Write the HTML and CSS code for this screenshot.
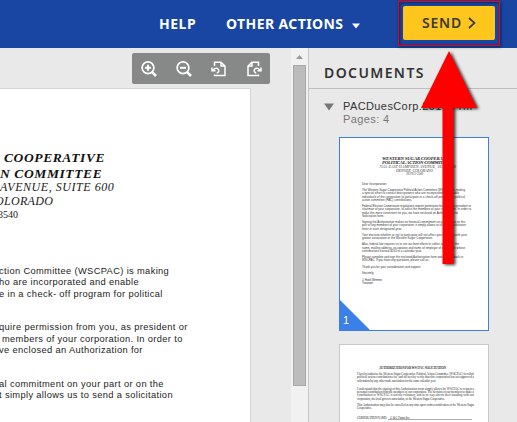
FILE: index.html
```html
<!DOCTYPE html>
<html lang="en">
<head>
<meta charset="utf-8">
<title>Documents</title>
<link rel="stylesheet" href="styles.css">
</head>
<body>
<header class="topbar">
  <a class="nav help">HELP</a>
  <a class="nav actions">OTHER ACTIONS</a>
  <svg class="caret" width="8" height="6" viewBox="0 0 8 6"><path d="M0 0.5H8L4 5.5Z" fill="#fff"/></svg>
  <div class="send-frame">
    <button class="send"><span>SEND</span><svg width="8" height="12" viewBox="0 0 8 12"><path d="M1 1L6.5 6L1 11" fill="none" stroke="#3c3a35" stroke-width="1.7"/></svg></button>
  </div>
</header>
<main class="workspace">
  <section class="viewer">
    <div class="toolbar">
      <svg width="16" height="16" viewBox="0 0 16 16" class="icon"><circle cx="7" cy="6.8" r="5.9"/><path d="M11 11L15 15" stroke-width="2.5"/><path d="M4 6.8H10M7 3.8V9.8" stroke-width="2"/></svg>
      <svg width="16" height="16" viewBox="0 0 16 16" class="icon"><circle cx="7" cy="6.8" r="5.9"/><path d="M11 11L15 15" stroke-width="2.5"/><path d="M4 6.8H10" stroke-width="2"/></svg>
      <svg width="16" height="16" viewBox="0 0 16 16" class="icon"><path d="M3.500 5V1.200H10L14 5V14.500H3.500V13.500M10 1.500V5H14" stroke-width="1.500"/><path d="M1.500 9.300Q5.500 5.800 7.300 8.200Q8.800 11 5.800 12M1 6.500V9.800H4.500" stroke-width="1.500"/></svg>
      <svg width="16" height="16" viewBox="0 0 16 16" class="icon"><path d="M12.500 5V1.200H6L2 5V14.500H12.500V13.500M6 1.500V5H2" stroke-width="1.500"/><path d="M14.500 9.300Q10.500 5.800 8.700 8.200Q7.200 11 10.200 12M15 6.500V9.800H11.500" stroke-width="1.500"/></svg>
    </div>
    <article class="page">
      <div class="letterhead">
        <p class="org l1">COOPERATIVE</p>
        <p class="org l2">N COMMITTEE</p>
        <p class="addr l3">AVENUE, SUITE 600</p>
        <p class="addr l4">OLORADO</p>
        <p class="phone">3540</p>
      </div>
      <div class="copy">
        <p>ction Committee (WSCPAC) is making<br>ho are incorporated and enable<br>e in a check- off program for political</p>
        <p>quire permission from you, as president or<br>&nbsp;members of your corporation. In order to<br>ve enclosed an Authorization for</p>
        <p>al commitment on your part or on the<br>t simply allows us to send a solicitation</p>
      </div>
    </article>
  </section>
  <div class="scrollbar">
    <svg width="7" height="4" viewBox="0 0 7 4"><path d="M0 4L3.5 0L7 4Z" fill="#999"/></svg>
    <div class="handle"></div>
  </div>
  <aside class="documents">
    <h2>DOCUMENTS</h2>
    <div class="file">
      <svg width="10" height="8" viewBox="0 0 10 8"><path d="M0 0.5H10L5 7.5Z" fill="#777"/></svg>
      <div><div class="name">PACDuesCorp.2014.Frm</div><div class="count">Pages: 4</div></div>
    </div>
    <div class="thumb selected">
      <svg width="148" height="192" viewBox="340 138 148 192">
        <g class="thumb-head">
          <text x="382" y="159.500" textLength="71">WESTERN SUGAR COOPERATIVE</text>
          <text x="382" y="164" textLength="70">POLITICAL ACTION COMMITTEE</text>
        </g>
        <g class="thumb-address">
          <text x="379" y="168" textLength="77">7555 EAST HAMPDEN AVENUE, SUITE 600</text>
          <text x="396" y="171.500" textLength="37">DENVER, COLORADO</text>
          <text x="406" y="175" textLength="17" class="tiny">303-813-3540</text>
        </g>
        <g class="thumb-copy">
          <text x="362" y="185" textLength="25">Dear Incorporation:</text>
          <text x="362" y="191" textLength="103">The Western Sugar Cooperative Political Action Committee (WSCPAC) is making</text>
          <text x="362" y="194.300" textLength="97">a special effort to contact beet growers who are incorporated and enable</text>
          <text x="362" y="197.600" textLength="103">individuals of the corporation to participate in a check-off program for political</text>
          <text x="362" y="200.900" textLength="50">action committee (PAC) contributions.</text>
          <text x="362" y="207" textLength="109">Federal Election Commission regulations require permission from you, as president or</text>
          <text x="362" y="210.300" textLength="109">chairman of your corporation, to solicit the members of your corporation. In order to</text>
          <text x="362" y="213.600" textLength="96">make this more convenient for you, we have enclosed an Authorization for</text>
          <text x="362" y="216.900" textLength="22">Solicitation form.</text>
          <text x="362" y="223" textLength="103">Signing the Authorization makes no financial commitment on your part or on the</text>
          <text x="362" y="226.300" textLength="104">part of any members of your corporation; it simply allows us to send a solicitation</text>
          <text x="362" y="229.600" textLength="40">letter in each designated year.</text>
          <text x="362" y="235.700" textLength="105">Your decision whether or not to participate will not affect your standing with your</text>
          <text x="362" y="239" textLength="71">grower association or the Western Sugar Cooperative.</text>
          <text x="362" y="245.200" textLength="97">Also, federal law requires us to use our best efforts to collect and report the</text>
          <text x="362" y="248.500" textLength="103">name, mailing address, occupation and name of employer of individuals whose</text>
          <text x="362" y="251.800" textLength="60">contributions exceed $200 in a calendar year.</text>
          <text x="362" y="258" textLength="101">Please complete and sign the enclosed Authorization form and return it back to</text>
          <text x="362" y="261.300" textLength="67">WSCPAC. If you have any questions, please call us.</text>
          <text x="362" y="267.500" textLength="59">Thank you for your consideration and support.</text>
          <text x="362" y="274" textLength="12">Sincerely,</text>
          <text x="362" y="280.500" textLength="20">J. Hank Wimmer</text>
          <text x="362" y="283.800" textLength="11">Treasurer</text>
        </g>
        <path d="M340 300L370 330H340Z" fill="#3a80e8"/>
        <text x="343" y="324" class="number">1</text>
      </svg>
    </div>
    <div class="thumb">
      <svg width="148" height="190" viewBox="340 345 148 190">
        <g class="thumb-form">
          <text x="379" y="368.500" textLength="67" font-weight="bold">AUTHORIZATION FOR WSCPAC SOLICITATION</text>
          <text x="357" y="375" textLength="117">I hereby authorize the Western Sugar Cooperative Political Action Committee (WSCPAC) to solicit</text>
          <text x="357" y="378.400" textLength="117">political action contributions for, and do hereby verify that this corporation has not approved a</text>
          <text x="357" y="381.800" textLength="79">solicitation by any other trade association for the same calendar year.</text>
          <text x="357" y="389.500" textLength="117">I understand that the signing of this Authorization form simply allows the WSCPAC to request a</text>
          <text x="357" y="392.800" textLength="117">personal contribution from the members of our corporation. The decision of our members to make a</text>
          <text x="357" y="396.200" textLength="117">contribution to WSCPAC is strictly voluntary, and in no way affects their standing with our</text>
          <text x="357" y="399.600" textLength="88">corporation, the local growers association, or the Western Sugar Cooperative.</text>
          <text x="357" y="406" textLength="117">This Authorization may also be cancelled at any time upon written notification of the Western Sugar</text>
          <text x="357" y="409.400" textLength="15">Cooperative.</text>
          <text x="357" y="419" textLength="30">CORPORATION NAME:</text>
          <text x="390" y="419" textLength="20">G &amp; C Farms Inc.</text>
          <path d="M388 419.500H472" stroke="#777" stroke-width=".6"/>
        </g>
      </svg>
    </div>
  </aside>
</main>
<svg class="pointer" width="70" height="225" viewBox="415 45 70 225"><path d="M449 51L477 108H453.500V264H442.500V108H421Z" fill="#f00"/></svg>
</body>
</html>
```

FILE: styles.css
```css
* { box-sizing: border-box; }
body { margin: 0; width: 517px; height: 422px; overflow: hidden; position: relative; background: #e9e9e9; font-family: "Liberation Sans", Arial, sans-serif; }
p, h2 { margin: 0; }
svg { display: block; flex: none; }
.topbar { display: flex; height: 48px; background: #1846a2; align-items: flex-start; font-family: "Noto Sans", sans-serif; }
.nav { color: #fff; font-size: 14px; font-weight: 700; line-height: 20px; padding-top: 14px; white-space: nowrap; }
.help { margin-left: 159px; width: 67px; letter-spacing: .5px; }
.actions { width: 126px; letter-spacing: .4px; }
.caret { margin-top: 23px; }
.send-frame { margin: 1px 0 0 38px; width: 102px; height: 45px; border: 1px solid #f00010; padding: 4px; box-shadow: 1px 1px 3px rgba(0,0,0,.45), inset 1px 1px 3px rgba(0,0,0,.45); }
.send { display: flex; align-items: center; width: 92px; height: 34px; border: 0; border-radius: 2px; background: #ffc61e; color: #3c3a35; padding: 0 0 0 19px; font: 600 14px/20px "Noto Sans", sans-serif; letter-spacing: .8px; }
.send svg { margin-left: 6px; }
.workspace { display: flex; height: 374px; }
.viewer { width: 291px; overflow: hidden; }
.toolbar { margin: 5px 0 0 132px; width: 138px; height: 31px; border-radius: 2px; background: #868987; display: flex; align-items: center; padding-left: 9px; gap: 19px; }
.icon { fill: none; stroke: #fff; stroke-width: 1.7; }
.page { margin-top: 4px; width: 251px; height: 340px; background: #fff; border: 1px solid #d6d6d6; border-left: 0; overflow: hidden; color: #222; white-space: nowrap; }
.letterhead { font-family: "Liberation Serif", serif; padding-top: 61px; height: 177px; }
.org { font-size: 13.5px; font-weight: 700; font-style: italic; line-height: 15.5px; color: #111; }
.l1 { margin-left: 4px; letter-spacing: .6px; }
.l2 { letter-spacing: .6px; }
.addr { font-size: 12px; font-style: italic; line-height: 13.5px; }
.l3 { letter-spacing: .55px; }
.l4 { margin-left: -5px; letter-spacing: .3px; }
.phone { font-size: 10px; line-height: 13px; margin-left: -2px; }
.copy { font-size: 9.3px; line-height: 11.25px; letter-spacing: .36px; margin-left: -1px; }
.copy p { margin-bottom: 22.5px; }
.scrollbar { width: 17px; background: #f1f1f1; padding: 7px 2px 0; }
.scrollbar svg { margin: 0 auto 6px 3px; }
.handle { width: 13px; height: 321px; background: #bcbcbc; border: 1px solid #a8a8a8; }
.documents { width: 209px; border-left: 1px solid #c8c8c8; overflow: hidden; }
.documents h2 { height: 41px; border-bottom: 1px solid #bdbdbd; padding: 15px 0 0 15px; font: 600 14px/20px "Noto Sans", sans-serif; letter-spacing: 1.4px; color: #333; }
.file { display: flex; padding: 11px 0 0 15px; height: 48px; }
.file > svg { margin: 3px 9px 0 0; }
.name, .count { font-size: 11px; line-height: 13px; letter-spacing: .4px; white-space: nowrap; color: #333; }
.count { color: #777; }
.thumb { margin: 0 0 13px 30px; width: 150px; border: 1px solid #c5c9c8; background: #fff; }
.selected { border-color: #3a80e8; }
.thumb-head { font: italic bold 4.8px "Liberation Serif", serif; fill: #222; }
.thumb-address { font: italic 4px "Liberation Serif", serif; fill: #444; }
.tiny { font-size: 3px; }
.thumb-copy { font: 2.9px "Liberation Sans", sans-serif; fill: #333; }
.thumb-form { font-family: "Liberation Serif", serif; font-size: 3.2px; fill: #333; }
.number { font: 11px "Liberation Sans", sans-serif; fill: #fff; }
.pointer { position: absolute; left: 415px; top: 45px; filter: drop-shadow(2px 1px 1.500px rgba(0,0,0,.75)); }
```
